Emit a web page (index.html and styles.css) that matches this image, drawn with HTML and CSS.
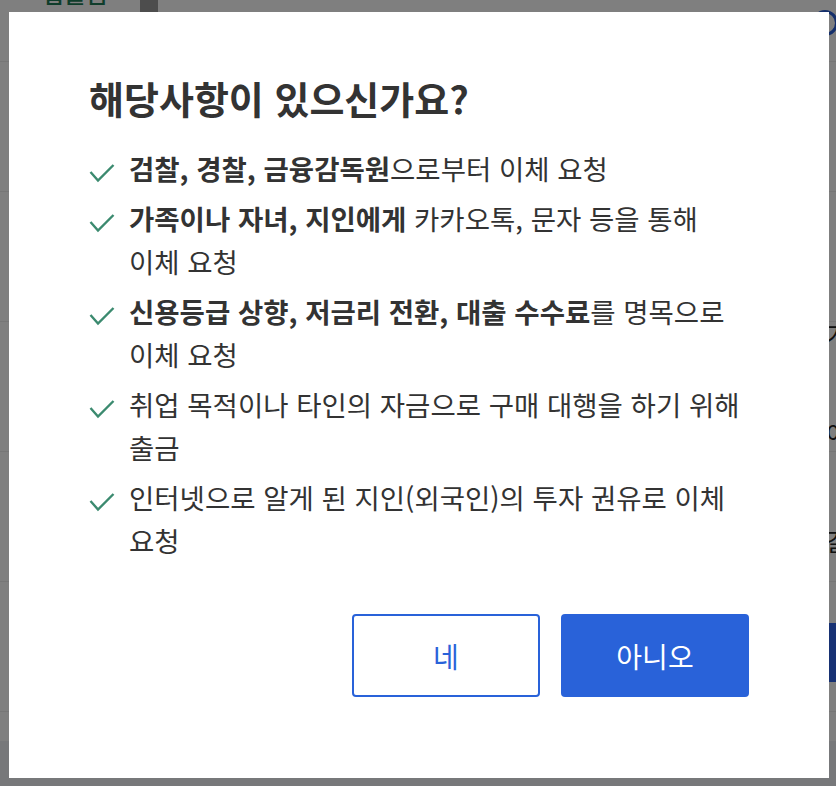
FILE: index.html
```html
<!DOCTYPE html>
<html lang="ko">
<head>
  <meta charset="UTF-8" />
  <meta name="viewport" content="width=device-width, initial-scale=1.0"/>
  <title>해당사항 확인</title>
  <link rel="stylesheet" href="styles.css">
</head>
<body>

  <div class="page">
    <div class="page-head">
      <span class="tab-label">입출금</span>
      <span class="scroll-thumb"></span>
      <span class="badge"></span>
    </div>
    <div class="row"></div>
    <div class="row"></div>
    <div class="row row-top"><span class="row-text">가<br>어</span></div>
    <div class="row row-bottom"><span class="row-text">갈</span></div>
    <div class="row"><span class="row-btn"></span></div>
    <div class="row row-last"></div>
    <div class="page-foot"></div>
  </div>

  <div class="dim"></div>

  <div class="modal">
    <h1 class="modal-title">해당사항이 있으신가요?</h1>
    <ul class="checklist">
      <li>
        <svg class="check" viewBox="0 0 26 23"><polyline points="1.5,11 9,19.5 24.5,4"/></svg>
        <b>검찰, 경찰, 금융감독원</b>으로부터 이체 요청
      </li>
      <li>
        <svg class="check" viewBox="0 0 26 23"><polyline points="1.5,11 9,19.5 24.5,4"/></svg>
        <b>가족이나 자녀, 지인에게</b> 카카오톡, 문자 등을 통해 이체 요청
      </li>
      <li>
        <svg class="check" viewBox="0 0 26 23"><polyline points="1.5,11 9,19.5 24.5,4"/></svg>
        <b>신용등급 상향, 저금리 전환, 대출 수수료</b>를 명목으로 이체 요청
      </li>
      <li>
        <svg class="check" viewBox="0 0 26 23"><polyline points="1.5,11 9,19.5 24.5,4"/></svg>
        취업 목적이나 타인의 자금으로 구매 대행을 하기 위해 출금
      </li>
      <li>
        <svg class="check" viewBox="0 0 26 23"><polyline points="1.5,11 9,19.5 24.5,4"/></svg>
        인터넷으로 알게 된 지인(외국인)의 투자 권유로 이체 요청
      </li>
    </ul>
    <div class="actions">
      <button class="btn btn-outline">네</button>
      <button class="btn btn-primary">아니오</button>
    </div>
  </div>

</body>
</html>
```

FILE: styles.css
```css
html, body {
  margin: 0;
  padding: 0;
  height: 100%;
  overflow: hidden;
}
body {
  font-family: "Noto Sans CJK KR", "Noto Sans", sans-serif;
  background-color: #ffffff;
  color: #333;
}

/* page behind the dialog */
.page {
  display: flex;
  flex-direction: column;
  height: 100%;
}
.page-head {
  flex: none;
  height: 61px;
  border-bottom: 1px solid #ececec;
  position: relative;
}
.tab-label {
  position: absolute;
  left: 42px;
  top: -25px;
  font-size: 24px;
  font-weight: 500;
  color: #1f7a57;
}
.scroll-thumb {
  position: absolute;
  left: 140px;
  top: 0;
  width: 18px;
  height: 13px;
  background-color: #9a9a9a;
}
.badge {
  position: absolute;
  left: 812px;
  top: 10px;
  width: 26px;
  height: 26px;
  border: 3px solid #2a5fd6;
  border-radius: 50%;
  box-sizing: border-box;
}
.row {
  flex: none;
  height: 129px;
  border-bottom: 1px solid #ececec;
  display: flex;
  justify-content: flex-end;
  align-items: center;
}
.row-top {
  align-items: flex-start;
}
.row-bottom {
  align-items: flex-end;
}
.row-last {
  height: 29px;
  border-bottom: none;
}
.row-text {
  font-size: 24px;
  line-height: 99px;
  color: #222;
  margin-right: -12px;
  margin-top: -38px;
}
.row-bottom .row-text {
  line-height: 40px;
  margin-top: 0;
  margin-bottom: 20px;
}
.row-btn {
  width: 40px;
  height: 59px;
  margin-right: -10px;
  margin-top: 12px;
  background-color: #2e63e6;
}
.page-foot {
  flex: 1;
  background-color: #eef0f4;
}

.dim {
  position: fixed;
  inset: 0;
  background-color: rgba(0, 0, 0, 0.5);
}

/* dialog */
.modal {
  position: fixed;
  left: 9px;
  top: 12px;
  width: 820px;
  height: 766px;
  box-sizing: border-box;
  padding: 61px 80px 81px 80px;
  background-color: #fff;
  display: flex;
  flex-direction: column;
}
.modal-title {
  margin: 0;
  font-size: 38px;
  line-height: 50px;
  font-weight: 700;
  color: #333;
}
.checklist {
  list-style: none;
  margin: 24px 0 0 0;
  padding: 0;
}
.checklist li {
  position: relative;
  padding-left: 40px;
  margin-bottom: 7px;
  font-size: 27.5px;
  line-height: 43px;
  color: #333;
  word-break: keep-all;
}
.check {
  position: absolute;
  left: 0;
  top: 14px;
  width: 26px;
  height: 23px;
  fill: none;
  stroke: #3b8a6f;
  stroke-width: 2.4;
}
.checklist b {
  font-weight: 700;
}
.actions {
  margin-top: auto;
  display: flex;
  justify-content: flex-end;
  gap: 21px;
}
.btn {
  width: 188px;
  height: 83px;
  border-radius: 4px;
  font-family: inherit;
  font-size: 28px;
  cursor: pointer;
}
.btn-outline {
  background-color: #fff;
  border: 2px solid #2962d9;
  color: #2962d9;
}
.btn-primary {
  background-color: #2962d9;
  border: none;
  color: #fff;
}
```
